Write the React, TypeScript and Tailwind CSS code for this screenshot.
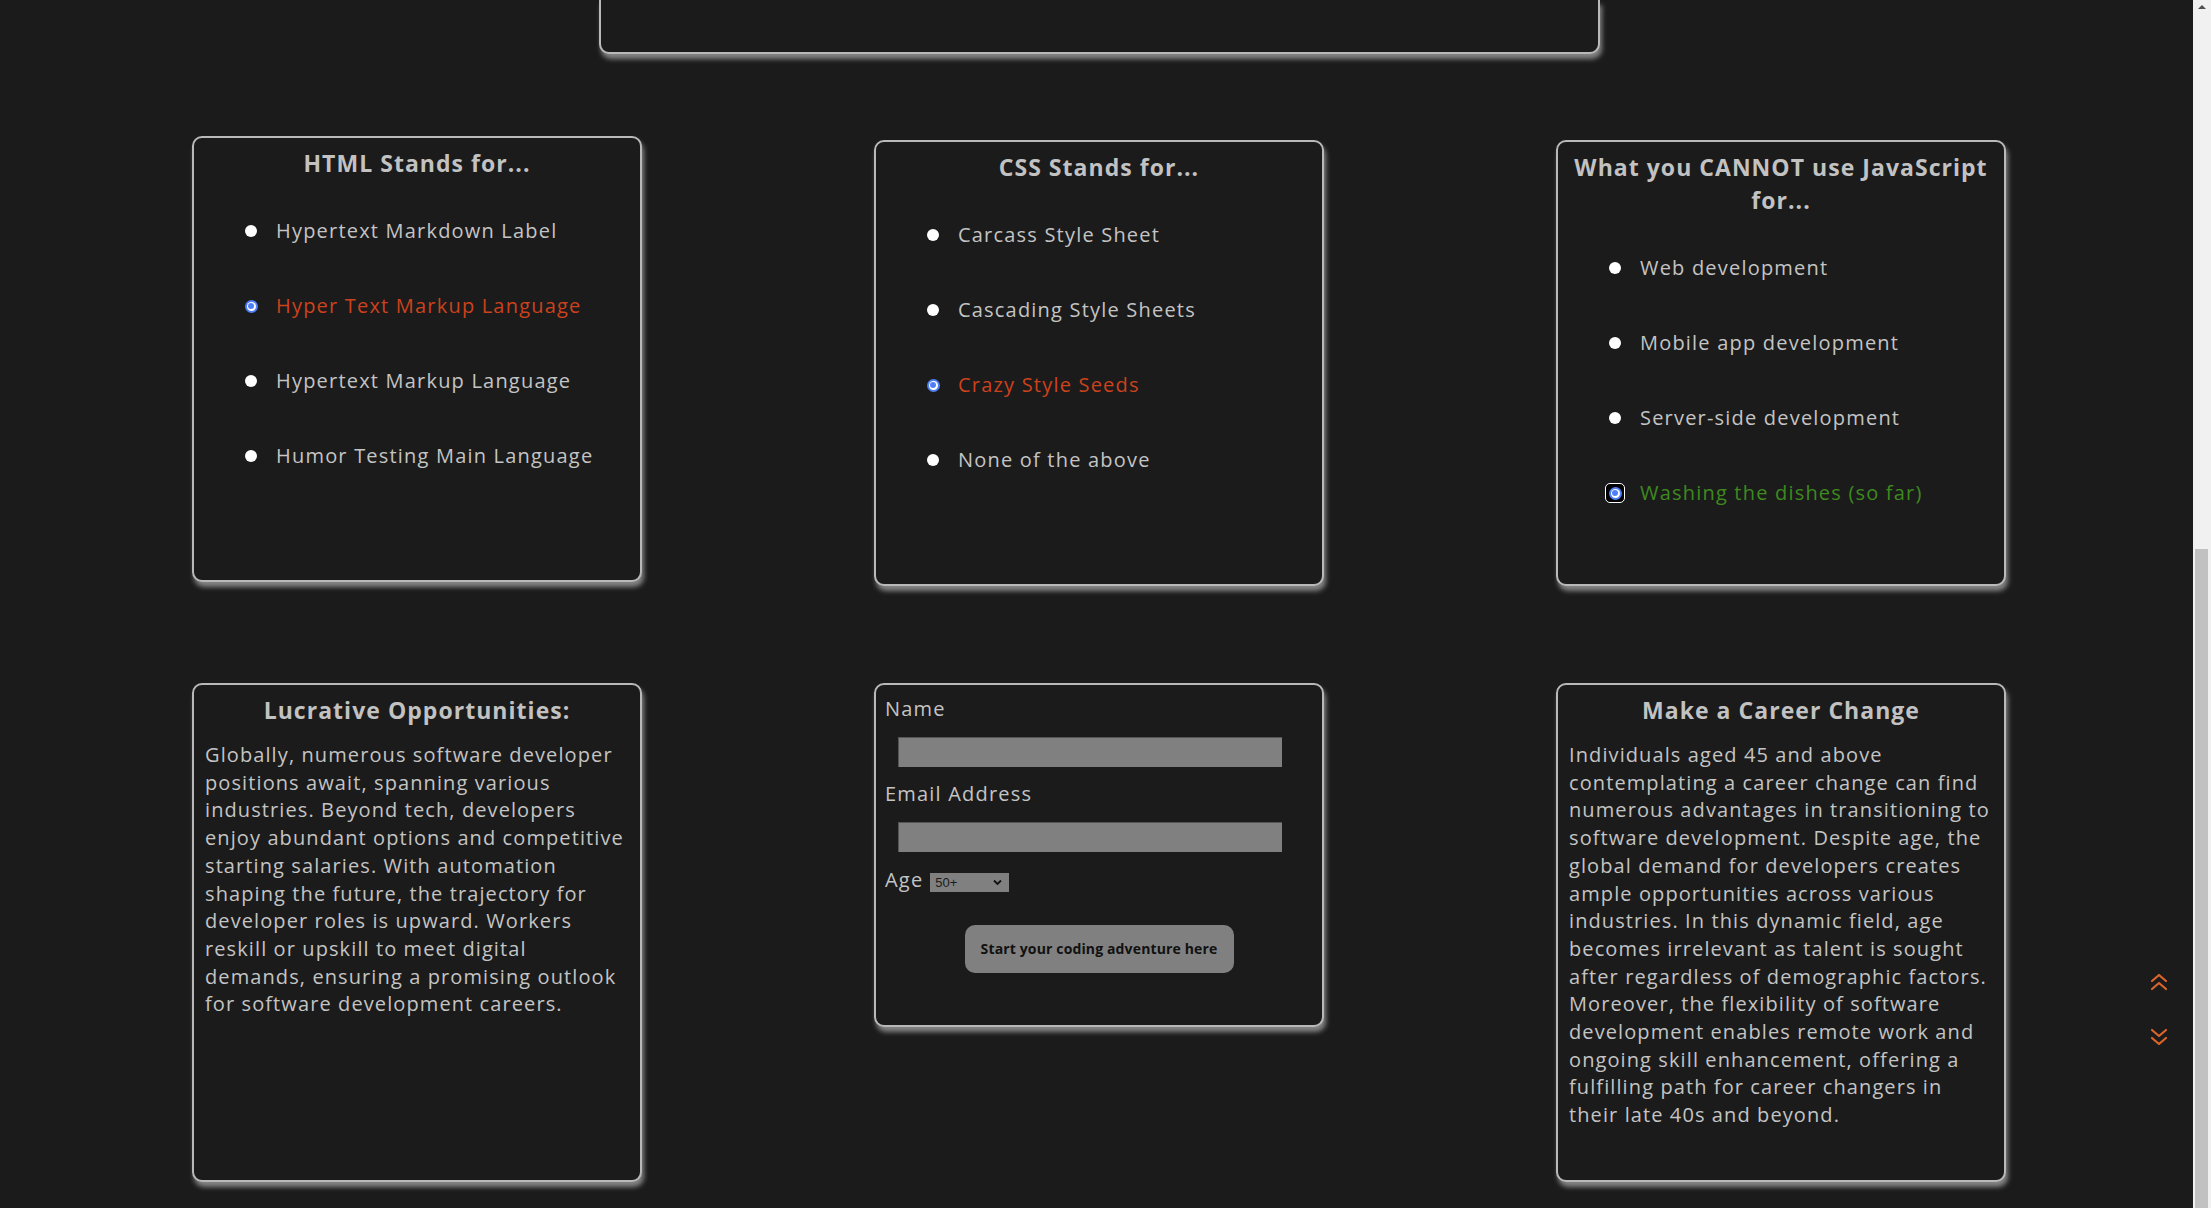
import React from 'react';

const FONT = "font-['Open_Sans','Noto_Sans',sans-serif]";

const CARD =
  'rounded-[10px] border-2 border-[#b9b9b9] bg-[#1b1b1b] shadow-[2px_5px_5px_#858585]';

type Option = { label: string; state?: 'wrong' | 'right'; focus?: boolean };

const QUIZZES: { title: string[]; options: Option[]; offset: string }[] = [
  {
    title: ['HTML Stands for...'],
    offset: '',
    options: [
      { label: 'Hypertext Markdown Label' },
      { label: 'Hyper Text Markup Language', state: 'wrong' },
      { label: 'Hypertext Markup Language' },
      { label: 'Humor Testing Main Language' },
    ],
  },
  {
    title: ['CSS Stands for...'],
    offset: 'mt-[4px]',
    options: [
      { label: 'Carcass Style Sheet' },
      { label: 'Cascading Style Sheets' },
      { label: 'Crazy Style Seeds', state: 'wrong' },
      { label: 'None of the above' },
    ],
  },
  {
    title: ['What you CANNOT use JavaScript', 'for...'],
    offset: 'mt-[4px]',
    options: [
      { label: 'Web development' },
      { label: 'Mobile app development' },
      { label: 'Server-side development' },
      { label: 'Washing the dishes (so far)', state: 'right', focus: true },
    ],
  },
];

const LUCRATIVE = [
  'Globally, numerous software developer',
  'positions await, spanning various',
  'industries. Beyond tech, developers',
  'enjoy abundant options and competitive',
  'starting salaries. With automation',
  'shaping the future, the trajectory for',
  'developer roles is upward. Workers',
  'reskill or upskill to meet digital',
  'demands, ensuring a promising outlook',
  'for software development careers.',
];

const CAREER = [
  'Individuals aged 45 and above',
  'contemplating a career change can find',
  'numerous advantages in transitioning to',
  'software development. Despite age, the',
  'global demand for developers creates',
  'ample opportunities across various',
  'industries. In this dynamic field, age',
  'becomes irrelevant as talent is sought',
  'after regardless of demographic factors.',
  'Moreover, the flexibility of software',
  'development enables remote work and',
  'ongoing skill enhancement, offering a',
  'fulfilling path for career changers in',
  'their late 40s and beyond.',
];

const Radio = ({ checked, focus }: { checked: boolean; focus?: boolean }) => {
  if (!checked) {
    return (
      <span className="flex w-[20px] justify-center">
        <span className="h-[12px] w-[12px] rounded-full bg-white" />
      </span>
    );
  }
  const dot = (
    <span className="flex h-[13px] w-[13px] items-center justify-center rounded-full bg-[#4f7ff7]">
      <span className="flex h-[9px] w-[9px] items-center justify-center rounded-full bg-white">
        <span className="h-[6px] w-[6px] rounded-full bg-[#4f7ff7]" />
      </span>
    </span>
  );
  return (
    <span className="flex w-[20px] justify-center">
      {focus ? (
        <span className="flex h-[20px] w-[20px] items-center justify-center rounded-[5px] border-[1.5px] border-white bg-black">
          {dot}
        </span>
      ) : (
        dot
      )}
    </span>
  );
};

const QuizCard = ({ title, options, offset }: (typeof QUIZZES)[number]) => (
  <div className={`${CARD} ${offset} h-[446px]`}>
    <h2 className="pt-[9px] text-center text-[23px] font-bold leading-[33px] tracking-[0.045em] text-[#c2c2c2]">
      {title.map((t) => (
        <span key={t} className="block whitespace-nowrap">
          {t}
        </span>
      ))}
    </h2>
    <ul className="mt-[37px] flex flex-col gap-[47px] pl-[47px]">
      {options.map((o) => (
        <li key={o.label} className="flex h-[28px] items-center">
          <Radio checked={!!o.state} focus={o.focus} />
          <span
            className={`ml-[15px] whitespace-nowrap text-[20px] leading-[28px] tracking-[0.06em] ${
              o.state === 'wrong'
                ? 'text-[#cc421c]'
                : o.state === 'right'
                  ? 'text-[#3e8a1f]'
                  : 'text-[#c4c4c4]'
            }`}
          >
            {o.label}
          </span>
        </li>
      ))}
    </ul>
  </div>
);

const TextCard = ({ title, lines }: { title: string; lines: string[] }) => (
  <div className={`${CARD} h-[499px] px-[11px]`}>
    <h2 className="pt-[9px] text-center text-[23px] font-bold leading-[33px] tracking-[0.045em] text-[#c2c2c2]">
      {title}
    </h2>
    <p className="mt-[14px] text-[20px] leading-[27.7px] tracking-[0.055em] text-[#c4c4c4]">
      {lines.map((l) => (
        <span key={l} className="block whitespace-nowrap">
          {l}
        </span>
      ))}
    </p>
  </div>
);

const SignupCard = () => (
  <div
    className={`${CARD} h-[344px] px-[9px] pt-[10px] text-[20px] leading-[28px] tracking-[0.06em] text-[#c4c4c4]`}
  >
    <label className="block">Name</label>
    <input className="ml-[13px] mt-[14px] block h-[30px] w-[384px] border-l border-t border-[#555] bg-[#808080] outline-none" />
    <label className="mt-[13px] block">Email Address</label>
    <input className="ml-[13px] mt-[14px] block h-[30px] w-[384px] border-l border-t border-[#555] bg-[#808080] outline-none" />
    <div className="mt-[14px] flex h-[28px] items-center gap-[7px]">
      <span>Age</span>
      <div className="mt-[4px] flex h-[19px] w-[79px] items-center justify-between bg-[#808080] pl-[5px] pr-[7px] font-['Liberation_Sans',sans-serif] text-[13px] leading-none tracking-normal text-[#1b1b1b]">
        <span>50+</span>
        <svg width="9" height="7" viewBox="0 0 9 7">
          <polyline points="1,1.5 4.5,5 8,1.5" fill="none" stroke="#111" strokeWidth="1.8" />
        </svg>
      </div>
    </div>
    <div className="mt-[31px] flex justify-center">
      <button className="h-[48px] w-[269px] rounded-[10px] bg-[#808080] text-[14px] font-bold leading-none tracking-[0.01em] text-[#111]">
        Start your coding adventure here
      </button>
    </div>
  </div>
);

const Chevrons = ({ down }: { down?: boolean }) => (
  <svg width="18" height="19" viewBox="0 0 18 19" className={down ? 'rotate-180' : ''}>
    <g fill="none" stroke="#dc652b" strokeWidth="2.2" strokeLinecap="round" strokeLinejoin="round">
      <polyline points="2,9 9,3 16,9" />
      <polyline points="2,17 9,11 16,17" />
    </g>
  </svg>
);

const App: React.FC = () => {
  return (
    <div className={`flex h-screen w-full overflow-hidden bg-[#1b1b1b] ${FONT}`}>
      <main className="relative flex-1">
        {/* bottom of the hero card, the rest is scrolled off */}
        <div className="ml-[599px] h-[54px] w-[1001px] rounded-b-[10px] border-x-2 border-b-2 border-[#b9b9b9] bg-[#1b1b1b] shadow-[2px_5px_5px_#858585]" />

        <section className="ml-[192px] mt-[82px] grid grid-cols-[450px_450px_450px] items-start gap-x-[232px]">
          {QUIZZES.map((q) => (
            <QuizCard key={q.title[0]} {...q} />
          ))}
        </section>

        <section className="ml-[192px] mt-[97px] grid grid-cols-[450px_450px_450px] items-start gap-x-[232px]">
          <TextCard title="Lucrative Opportunities:" lines={LUCRATIVE} />
          <SignupCard />
          <TextCard title="Make a Career Change" lines={CAREER} />
        </section>

        <div className="absolute right-[25px] top-[972px] flex flex-col gap-[37px]">
          <Chevrons />
          <Chevrons down />
        </div>
      </main>

      {/* browser scrollbar, scrolled to the bottom */}
      <div className="flex w-[18px] flex-col bg-[#f1f1f1]">
        <svg width="18" height="14" viewBox="0 0 18 14" className="mt-[1px]">
          <polygon points="5,8 9,4 13,8" fill="#505050" />
        </svg>
        <div className="ml-[2px] mt-[534px] w-[13px] flex-1 bg-[#c1c1c1]" />
      </div>
    </div>
  );
};

export default App;
